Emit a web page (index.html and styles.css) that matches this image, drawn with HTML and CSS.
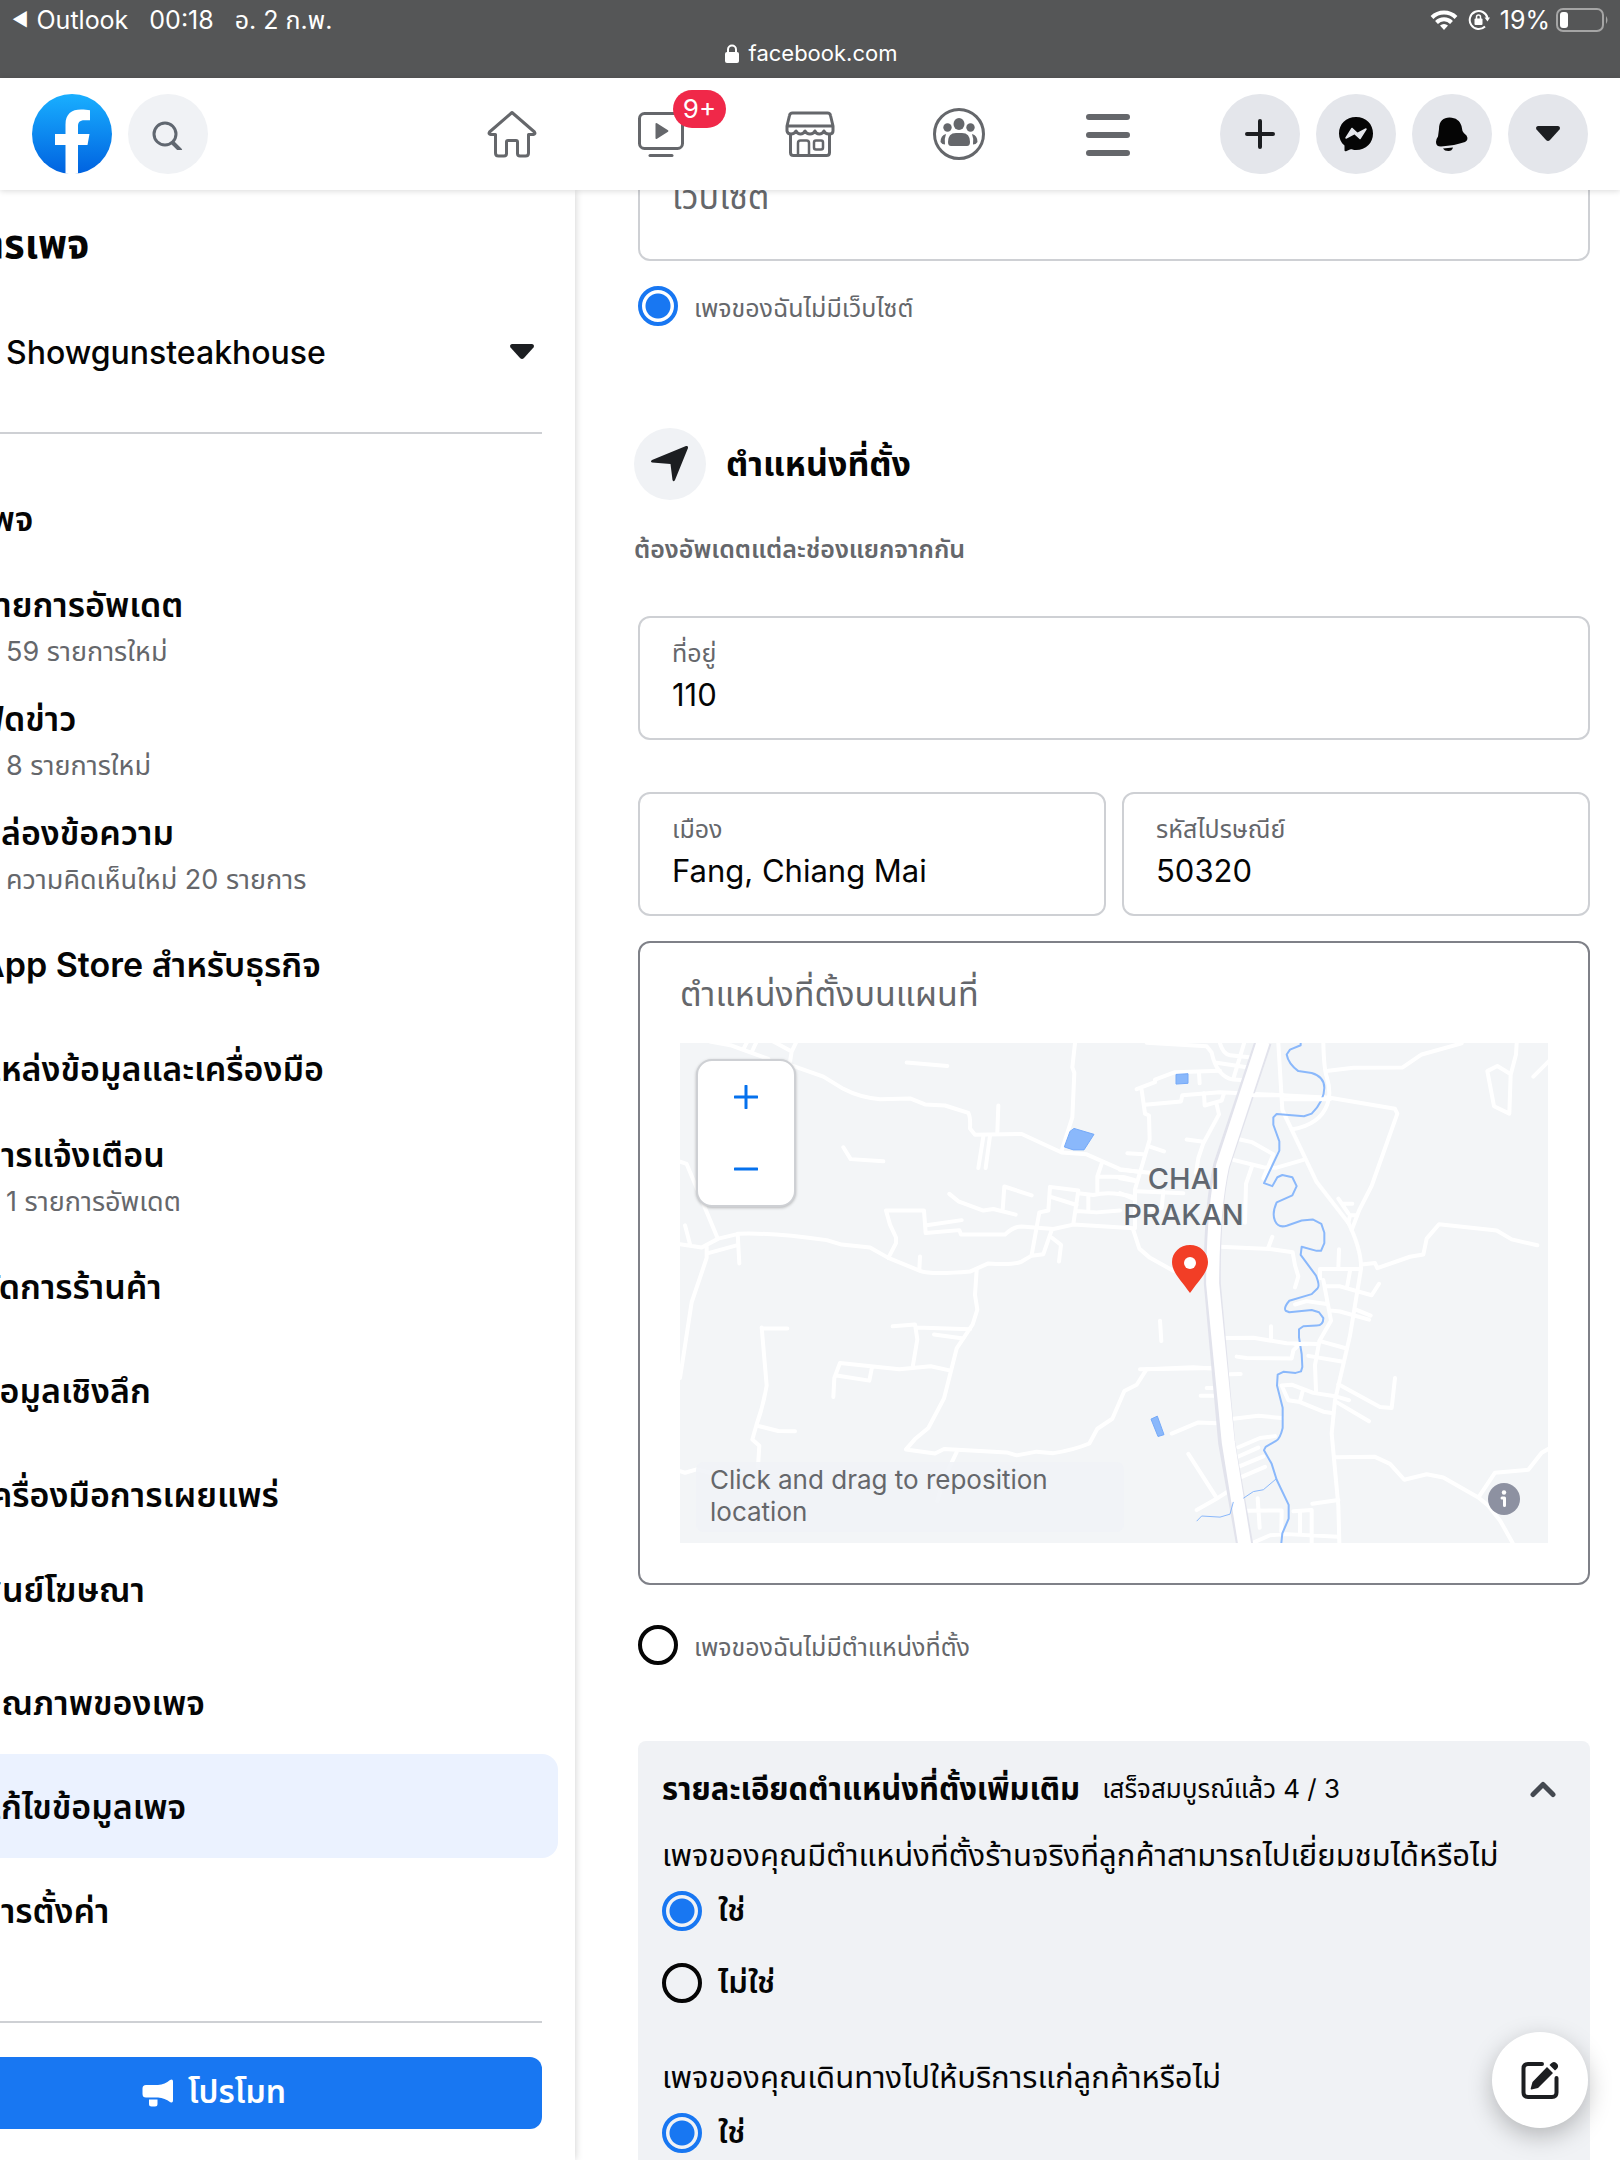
FILE: index.html
```
<!DOCTYPE html>
<html lang="th">
<head>
    <meta charset="UTF-8">
    <meta name="viewport" content="width=device-width, initial-scale=1.0">
    <title>แก้ไขข้อมูลเพจ | Facebook</title>
    <link rel="stylesheet" href="styles.css">
</head>
<body>
    <div class="statusbar">
        <div class="status-row">
            <span class="status-back">◀</span>
            <span>Outlook</span>
            <span class="status-time">00:18</span>
            <span class="status-time">อ. 2 ก.พ.</span>
            <div class="status-right">
                <svg width="28" height="22" viewBox="0 0 28 22" fill="none" stroke="#fff" stroke-width="4">
                    <path d="M2 8.5a17 17 0 0 1 24 0"/>
                    <path d="M6.500 13.500a10.500 10.500 0 0 1 15 0"/>
                    <path d="M14 21l-4-4.500a6 6 0 0 1 8 0z" fill="#fff" stroke="none"/>
                </svg>
                <svg width="22" height="22" viewBox="0 0 22 22" fill="none" stroke="#fff" stroke-width="2">
                    <path d="M17 17.500A9 9 0 1 1 19.500 9"/>
                    <path d="M16.500 8.500h5.500l-2.500 4z" fill="#fff" stroke="none"/>
                    <rect x="6.500" y="9.500" width="8" height="6.500" rx="1" fill="#fff" stroke="none"/>
                    <path d="M8.500 10V8a2 2 0 0 1 4 0v2" stroke-width="1.500"/>
                </svg>
                <span>19%</span>
                <svg width="54" height="24" viewBox="0 0 54 24">
                    <rect x="1" y="1" width="46" height="22" rx="6" fill="none" stroke="#a5a5a5" stroke-width="2"/>
                    <rect x="4" y="4" width="8" height="16" rx="3" fill="#fff"/>
                    <path d="M50 8q3 4 0 8z" fill="#a5a5a5"/>
                </svg>
            </div>
        </div>
        <div class="address-row">
            <svg width="14" height="19" viewBox="0 0 14 19">
                <rect x="0" y="8" width="14" height="11" rx="2" fill="#fff"/>
                <path d="M3 9V5.500a4 4 0 0 1 8 0V9" fill="none" stroke="#fff" stroke-width="2"/>
            </svg>
            <span>facebook.com</span>
        </div>
    </div>

    <header class="topbar">
        <div class="topbar-left">
            <a href="#" aria-label="Facebook">
                <svg width="80" height="80" viewBox="0 0 80 80">
                    <defs>
                        <linearGradient id="fb" x1="0" y1="0" x2="0" y2="1">
                            <stop offset="0" stop-color="#19afff"/>
                            <stop offset="1" stop-color="#0062e0"/>
                        </linearGradient>
                    </defs>
                    <circle cx="40" cy="40" r="40" fill="url(#fb)"/>
                    <path d="M33.500 80V51H23V40h10.500v-9.500c0-10.500 6-15 15.500-15 3.500 0 6.500.3 9 .8v10h-5.500c-5 0-6.500 2.200-6.500 6V40h11.500l-2 11H46v28.500q-6 1-12.500 0z" fill="#fff"/>
                </svg>
            </a>
            <button class="round-btn light" aria-label="ค้นหา">
                <svg width="32" height="32" viewBox="0 0 32 32" fill="none" stroke="#606770" stroke-width="3" stroke-linecap="round">
                    <circle cx="13" cy="16" r="11"/>
                    <path d="M21 25l7 7" stroke-width="4"/>
                </svg>
            </button>
        </div>
        <nav class="topnav">
            <a href="#" aria-label="หน้าหลัก">
                <svg width="52" height="52" viewBox="0 0 52 52" fill="none" stroke="#65676b" stroke-width="3" stroke-linejoin="round">
                    <path d="M26 4.500L3.500 24c-1 1.500 0 2.500 1 2.500H9.500v18.500q0 3 3 3h5.500q2.500 0 2.500-2.500V34q0-1.500 1.500-1.500h8q1.500 0 1.500 1.500v11.500q0 2.500 2.500 2.500h5.500q3 0 3-3V26.500h5c1 0 2-1 1-2.500z"/>
                </svg>
            </a>
            <a href="#" aria-label="วิดีโอ">
                <svg width="52" height="52" viewBox="0 0 52 52" fill="none" stroke="#65676b" stroke-width="3" stroke-linecap="round">
                    <rect x="4.500" y="5.500" width="43" height="35" rx="5"/>
                    <path d="M15 47.500h22"/>
                    <path d="M20.500 16v14q0 1.500 1.500.7l11-7q1-.7 0-1.400l-11-7q-1.500-.8-1.500.7z" fill="#65676b" stroke="none"/>
                </svg>
                <span class="badge">9+</span>
            </a>
            <a href="#" aria-label="Marketplace">
                <svg width="52" height="52" viewBox="0 0 52 52" fill="none" stroke="#65676b" stroke-width="3" stroke-linejoin="round">
                    <path d="M8.500 5h35q2.500 0 3 2.500L49 18v5q0 3-4 3t-5-3q-1.500 3-4.700 3T31 23q-1.500 3-5 3t-5-3q-1.500 3-4.500 3T12 23q-1.500 3-5 3t-4-3v-5L5.500 7.500q.5-2.500 3-2.500zM3 18h46"/>
                    <path d="M6.500 26v18.500q0 3 3 3h33q3 0 3-3V26"/>
                    <path d="M14 47V35q0-2.500 2.500-2.500h6Q25 32.500 25 35v12M30 34.500q0-2 2-2h5q2 0 2 2v5q0 2-2 2h-5q-2 0-2-2z" stroke-width="2.500"/>
                </svg>
            </a>
            <a href="#" aria-label="กลุ่ม">
                <svg width="52" height="52" viewBox="0 0 52 52" fill="#65676b">
                    <circle cx="26" cy="26" r="24.500" fill="none" stroke="#65676b" stroke-width="3"/>
                    <ellipse cx="26" cy="16" rx="5.500" ry="6"/>
                    <circle cx="14.500" cy="19.500" r="4.200"/>
                    <circle cx="37.500" cy="19.500" r="4.200"/>
                    <path d="M15 34q0-9 8-9h6q8 0 8 9 0 4-3 4H18q-3 0-3-4z"/>
                    <path d="M13 26q-5.500 1.500-5.500 8 1.500 2.500 4.500 2.500-1-5.500 1-10.500zM39 26q5.500 1.500 5.500 8-1.500 2.500-4.500 2.500 1-5.500-1-10.500z"/>
                </svg>
            </a>
            <a href="#" aria-label="เมนู">
                <svg width="52" height="52" viewBox="0 0 52 52" fill="none" stroke="#65676b" stroke-width="6" stroke-linecap="round">
                    <path d="M7 9h38M7 27h38M7 45h38"/>
                </svg>
            </a>
        </nav>
        <div class="topbar-right">
            <button class="round-btn" aria-label="สร้าง">
                <svg width="32" height="32" viewBox="0 0 32 32" stroke="#1c1e21" stroke-width="4" stroke-linecap="round">
                    <path d="M16 3v26M3 16h26"/>
                </svg>
            </button>
            <button class="round-btn" aria-label="Messenger">
                <svg width="36" height="36" viewBox="0 0 36 36">
                    <path d="M18 1C8 1 1 8 1 17.500c0 5 2 9.200 5.500 12V34.500q.3 1 1.500.7l4.500-2c2 .6 3.500.8 5.500.8 10 0 17-7 17-16.500S28 1 18 1z" fill="#050505"/>
                    <path d="M8 22l6-9.500 5.500 5L28 13l-6 9.500-5.500-5z" fill="#e4e6eb" stroke="#e4e6eb" stroke-width="1.500" stroke-linejoin="round"/>
                </svg>
            </button>
            <button class="round-btn" aria-label="การแจ้งเตือน">
                <svg width="36" height="36" viewBox="0 0 36 36" fill="#050505">
                    <path d="M5 13C5 5 9.500 1.500 15.500 1.500 22 1.500 26 5 27.500 10l1 5q.8 2 4 4.500 2.500 4-1.500 6.500-10 3.500-24 4.500-5 0-5-4.500 0-3 2-5.500z"/>
                    <path d="M9 32.500l10-1q-1 3.500-4.500 3.500-4 0-5.500-2.500z"/>
                </svg>
            </button>
            <button class="round-btn" aria-label="บัญชี">
                <svg width="26" height="18" viewBox="0 0 26 18"><path d="M3 1h20q3 1 1.500 3.500L15 15q-2 2-4 0L1.500 4.500Q0 2 3 1z" fill="#1c1e21"/></svg>
            </button>
        </div>
    </header>

    <div class="page">
        <aside class="sidebar">
            <h1>จัดการเพจ</h1>
            <button class="page-switch">
                <span>Showgunsteakhouse</span>
                <svg width="26" height="18" viewBox="0 0 26 18"><path d="M3 1h20q3 1 1.500 3.500L15 15q-2 2-4 0L1.500 4.500Q0 2 3 1z" fill="#1c1e21"/></svg>
            </button>
            <hr>
            <ul class="menu">
                <li class="menu-head">เพจ</li>
                <li><a href="#">รายการอัพเดต<small>59 รายการใหม่</small></a></li>
                <li><a href="#">ฟีดข่าว<small>8 รายการใหม่</small></a></li>
                <li><a href="#">กล่องข้อความ<small>ความคิดเห็นใหม่ 20 รายการ</small></a></li>
                <li><a href="#">App Store สำหรับธุรกิจ</a></li>
                <li><a href="#">แหล่งข้อมูลและเครื่องมือ</a></li>
                <li><a href="#">การแจ้งเตือน<small>1 รายการอัพเดต</small></a></li>
                <li><a href="#">จัดการร้านค้า</a></li>
                <li><a href="#">ข้อมูลเชิงลึก</a></li>
                <li><a href="#">เครื่องมือการเผยแพร่</a></li>
                <li><a href="#" class="external">ศูนย์โฆษณา</a></li>
                <li><a href="#">คุณภาพของเพจ</a></li>
                <li><a href="#" class="active">แก้ไขข้อมูลเพจ</a></li>
                <li><a href="#">การตั้งค่า</a></li>
            </ul>
            <div class="sidebar-foot">
                <button class="promote">
                    <svg width="32" height="28" viewBox="0 0 32 28" fill="#fff">
                        <path d="M4 6h12q7-.5 12-5 3-1.500 3 1.500v19q0 3-3 1.500-5-4-12-4.500H4q-3.500 0-3.500-3.500V9.500Q.5 6 4 6zM7 20.500h8.500V25q0 2.500-2.500 2.500H9.500Q7 27.500 7 25z"/>
                    </svg>
                    โปรโมท
                </button>
            </div>
        </aside>

        <main class="content">
            <div class="field website">
                <input type="text" id="website" placeholder="เว็บไซต์" aria-label="เว็บไซต์">
            </div>
            <label class="choice muted"><input type="radio" name="website" checked><span>เพจของฉันไม่มีเว็บไซต์</span></label>

            <div class="section-head">
                <span class="section-icon">
                    <svg width="40" height="38" viewBox="0 0 40 38"><path d="M36 1q2.500-.5 2 2L25 35q-1.500 2.500-2.500 0L20.500 19 2 17.500q-2-1 0-2.500z" fill="#1c1e21"/></svg>
                </span>
                <h2>ตำแหน่งที่ตั้ง</h2>
            </div>
            <p class="hint">ต้องอัพเดตแต่ละช่องแยกจากกัน</p>

            <div class="field address">
                <label for="address">ที่อยู่</label>
                <input type="text" id="address" value="110">
            </div>
            <div class="field-row">
                <div class="field">
                    <label for="city">เมือง</label>
                    <input type="text" id="city" value="Fang, Chiang Mai">
                </div>
                <div class="field">
                    <label for="zip">รหัสไปรษณีย์</label>
                    <input type="text" id="zip" value="50320">
                </div>
            </div>

            <section class="map-card">
                <h3>ตำแหน่งที่ตั้งบนแผนที่</h3>
                <div class="map">
                    <svg class="map-tiles" viewBox="60 59 2604 1352" preserveAspectRatio="none">
                        <!-- roads, west side -->
                        <g class="road">
                            <path d="M150 55L215 66L325 102M250 76L262 55M275 84L290 55M340 55L395 82L408 58M395 82L390 110M390 118L490 150L550 183Q600 207 660 211L750 209L795 225L855 228L925 248Q932 260 930 290L945 307L1085 305L1205 355L1280 360L1380 400L1440 408"/>
                            <path d="M740 112L862 121M1245 59L1237 125L1243 140L1237 260L1205 350M1015 228L1012 300M970 312L955 397M990 310L977 397M550 341L572 373L670 379"/>
                            <path d="M60 380L80 386L172 585M60 603L125 612L175 588L235 575Q330 571 500 592L545 604L630 612L685 640L780 675Q810 686 930 677L985 655Q1060 660 1085 650L1115 634L1150 630L1175 565M140 610V640L95 760L60 965M145 627L235 605M233 575L238 655M75 552L90 603"/>
                            <path d="M685 640L708 600V585L690 550L678 512H792L797 573L898 565L903 577H1035Q1060 555 1085 555L1180 562L1240 550L1420 560M800 552L905 538M778 672L780 636"/>
                            <path d="M868 467L895 487L970 512L1000 508L1067 523M1028 510L1033 447L1115 471M1115 632L1138 517L1165 512L1170 448L1255 458L1240 548M1172 475L1250 497M1255 465L1300 470Q1350 458 1420 475M1285 475V512M1250 513L1310 517L1380 512M1325 385L1312 420V462M1315 420L1390 421L1425 430M1175 585L1203 605L1197 650"/>
                            <path d="M950 673L945 740L952 780L938 820L890 885L852 1020L805 1100L765 1130L738 1158L825 1169L852 1157L1040 1166L1070 1174L1130 1164L1180 1168Q1240 1160 1288 1142L1312 1102L1357 1075L1393 1000L1430 983L1460 941L1600 936L1665 940"/>
                            <path d="M698 825L765 820L772 860L758 935M770 828L930 833M822 847L910 858M520 1016L523 965L540 924L718 941L812 933L872 945M530 958L628 972L635 940M305 828L320 985Q310 1040 290 1090L277 1131L298 1148L294 1205M308 830L382 831M292 1094L355 1108L405 1109M60 1217L75 1221L110 1212L150 1221M890 1165L850 1240L832 1298"/>
                        </g>
                        <!-- town and river, east side -->
                        <g transform="translate(1380 0)">
                            <g class="road">
                                <path d="M50 184L105 165V158L165 138L300 134M65 186L75 250L87 255L89 320L45 455V560M75 226L183 217L187 200L300 192L485 200L630 207L825 237L832 250L755 445L718 510L695 565"/>
                                <path d="M80 58L260 68L275 85Q290 150 340 158L375 160M300 60Q310 90 330 92L395 98M285 112L385 125M372 60L342 150M237 140L239 168M252 195L254 228L305 215L312 195M290 225L297 252L250 330L235 370L228 410M200 320L250 326M85 338L132 352M22 357L70 360M0 402L90 410M0 425L45 432M0 465L40 480M50 460L190 465M130 460L125 505L90 510"/>
                                <path d="M475 60L487 240L500 265L590 435L685 545Q725 620 723 670L690 850L645 1025L635 1115L655 1310L658 1410"/>
                                <path d="M610 60Q612 130 620 150Q635 195 622 225Q600 280 515 293M625 134L700 126L848 125L905 90L1025 60M360 320L395 327L460 360L430 425M340 375L430 395L470 396L550 375M395 395L378 440L375 545"/>
                                <path d="M40 565L58 615L90 640L160 675M300 610L450 616L518 625L525 660L535 690L525 720M445 612L457 583M120 810L124 865M60 941L290 938M315 857L400 856L500 871L595 873M453 825V857M350 907L380 911L515 912L520 890L540 872M330 955L362 954M260 992H298M242 1013H298"/>
                                <path d="M600 695V670L720 670M655 668L657 617M690 675L682 715M610 700L633 810L598 865L585 930L588 1000M615 716L660 717L755 741L777 710M525 766L560 757L620 765M630 782L660 785L747 807M708 780L752 796M600 865L680 885M565 905L665 920M725 658L765 654L772 668L870 637L910 631L920 588L957 549L1130 566L1175 590L1252 606"/>
                                <path d="M655 480L685 520M668 494H697M685 545L690 525H710M485 985L515 983L580 1005L650 1015L687 1025M485 985L505 1025L540 1030L610 1056L640 1060M540 1028L548 1000M655 982L780 1043L815 1046L825 965M650 1030L747 1082M340 1075L415 1067L485 1073M155 1115L235 1085L310 1088M355 1152L420 1127L465 1122M355 1177L415 1153M360 1203L430 1177M365 1232L435 1205M205 1170L287 1285M230 1322L287 1293L335 1265M413 1290L419 1370M375 1324L485 1323L484 1380M400 1410L450 1390L500 1387L655 1394M520 1325L575 1322V1410M577 1305L655 1295M540 1325V1385"/>
                                <path d="M645 1179L765 1178L810 1197L853 1240L920 1225L970 1234L1075 1288L1105 1310L1140 1350L1178 1411M1075 1288L1125 1221L1225 1213L1265 1167L1290 1154M1190 60L1188 90L1172 145L1168 250L1122 230L1102 135L1132 121L1170 142M1240 150L1290 105"/>
                            </g>
                            <path class="highway-edge" d="M430 55L305 390Q275 510 277 710L320 1140L375 1420"/>
                            <path class="highway" d="M430 55L308 390Q279 510 278 710L325 1140L375 1420"/>
                            <path class="river" d="M542 59V65L510 77L500 90Q505 115 535 135L575 140Q613 150 613 180Q613 215 575 250L552 257L470 251L460 260V280L478 325V350L432 438L457 446L472 422L487 416L517 422L530 446L517 471L470 490Q455 520 465 540Q475 560 500 553L545 539L578 536L604 548L613 572V600L603 621H590L545 610L542 632L588 688Q600 715 593 722L575 738L508 756Q490 775 497 783L508 787L575 781L597 787L610 803Q610 822 590 823L550 825L537 833V855L545 900L547 935L543 947L527 951L490 948L473 956L471 985L488 1045V1100Q480 1130 468 1135L437 1151L432 1160L455 1197L470 1240L506 1308V1345L487 1385L484 1411"/>
                            <path class="stream" d="M468 1238L430 1267L400 1272L370 1290M340 1300L330 1333L300 1341L245 1338L230 1352"/>
                            <path class="road" d="M400 200H490M490 211H630M525 873H560"/>
                            <path class="lake" d="M168 144L204 142V168L168 170zM93 1076L112 1068L132 1118L114 1123z"/>
                        </g>
                        <path class="lake" d="M1213 340L1230 298L1242 290L1302 306L1272 348H1240z"/>
                    </svg>
                    <div class="map-zoom">
                        <button aria-label="ขยาย"><svg width="24" height="24" viewBox="0 0 24 24"><path d="M12 1v22M1 12h22"/></svg></button>
                        <button aria-label="ย่อ"><svg width="24" height="24" viewBox="0 0 24 24"><path d="M1 12h22"/></svg></button>
                    </div>
                    <div class="map-place">CHAI<br>PRAKAN</div>
                    <svg class="map-pin" width="36" height="48" viewBox="0 0 36 48">
                        <path d="M18 0C8 0 0 7.500 0 17c0 10 8 17 18 31 10-14 18-21 18-31C36 7.500 28 0 18 0z" fill="#f23e26"/>
                        <circle cx="18" cy="18" r="6" fill="#fff"/>
                    </svg>
                    <div class="map-tip">Click and drag to reposition location</div>
                    <button class="map-info" aria-label="ข้อมูล">
                        <svg width="32" height="32" viewBox="0 0 32 32">
                            <circle cx="16" cy="16" r="16" fill="#8d91a1"/>
                            <circle cx="16" cy="9.500" r="2.200" fill="#fff"/>
                            <path d="M14 15h2.500v7.500" fill="none" stroke="#fff" stroke-width="3" stroke-linejoin="round" stroke-linecap="round"/>
                        </svg>
                    </button>
                </div>
            </section>
            <label class="choice muted"><input type="radio" name="nolocation"><span>เพจของฉันไม่มีตำแหน่งที่ตั้ง</span></label>

            <section class="details">
                <div class="details-head">
                    <h3>รายละเอียดตำแหน่งที่ตั้งเพิ่มเติม</h3>
                    <span>เสร็จสมบูรณ์แล้ว 4 / 3</span>
                    <button aria-label="ย่อส่วนนี้">
                        <svg width="26" height="18" viewBox="0 0 26 18" fill="none" stroke="#444950" stroke-width="5" stroke-linecap="round" stroke-linejoin="round"><path d="M3 14.500L13 4.500l10 10"/></svg>
                    </button>
                </div>
                <p>เพจของคุณมีตำแหน่งที่ตั้งร้านจริงที่ลูกค้าสามารถไปเยี่ยมชมได้หรือไม่</p>
                <label class="choice"><input type="radio" name="visit" checked>ใช่</label>
                <label class="choice"><input type="radio" name="visit">ไม่ใช่</label>
                <p class="next">เพจของคุณเดินทางไปให้บริการแก่ลูกค้าหรือไม่</p>
                <label class="choice"><input type="radio" name="travel" checked>ใช่</label>
            </section>
        </main>
    </div>

    <button class="compose" aria-label="ข้อความใหม่">
        <svg width="40" height="40" viewBox="0 0 40 40">
            <path d="M22 4H8Q3.500 4 3.500 8.500v24Q3.500 37 8 37h24q4.500 0 4.500-4.500V18" fill="none" stroke="#1c1e21" stroke-width="4" stroke-linecap="round"/>
            <path d="M27 7l6 6-15 15-6.500 1.500q-1 0-.8-1L12.500 22zM31 3.500q2.500-3 5.500-.3t.5 5.500L35 10.500 29.500 5z" fill="#1c1e21"/>
        </svg>
    </button>
</body>
</html>
```
FILE: styles.css
```
* {
    box-sizing: border-box;
}
body {
    margin: 0;
    height: 100vh;
    overflow: hidden;
    display: flex;
    flex-direction: column;
    background-color: #fff;
    color: #050505;
    font-family: Inter, "Noto Sans Thai", "Noto Sans", sans-serif;
}
a {
    color: inherit;
    text-decoration: none;
}
button, input {
    font-family: inherit;
    color: inherit;
}
button {
    border: none;
    padding: 0;
    background: none;
    cursor: pointer;
}
h1, h2, h3, p {
    margin: 0;
}
svg {
    display: block;
}

/* status bar */
.statusbar {
    flex: none;
    height: 78px;
    padding: 4px 10px 0 12px;
    background-color: #555657;
    color: #fff;
    font-size: 25px;
    line-height: 32px;
}
.status-row {
    display: flex;
    height: 32px;
}
.status-back {
    font-size: 18px;
    margin-right: 8px;
}
.status-time {
    margin-left: 21px;
}
.status-right {
    display: flex;
    align-items: center;
    gap: 10px;
    margin-left: auto;
}
.status-right span {
    margin-right: -4px;
}
.address-row {
    display: flex;
    justify-content: center;
    align-items: center;
    gap: 10px;
    height: 34px;
    font-size: 22px;
}

/* header */
.topbar {
    flex: none;
    position: relative;
    z-index: 2;
    display: flex;
    align-items: center;
    justify-content: space-between;
    height: 112px;
    padding: 0 32px;
    background-color: #fff;
    box-shadow: 0 1px 6px rgba(0, 0, 0, 0.15);
}
.topbar-left, .topbar-right {
    display: flex;
    gap: 16px;
    width: 368px;
}
.round-btn {
    display: flex;
    align-items: center;
    justify-content: center;
    width: 80px;
    height: 80px;
    border-radius: 50%;
    background-color: #e4e6eb;
}
.round-btn.light {
    background-color: #f0f2f5;
}
.topnav {
    flex: 1;
    display: flex;
    max-width: 746px;
}
.topnav a {
    flex: 1;
    position: relative;
    display: flex;
    justify-content: center;
}
.badge {
    position: absolute;
    left: 50%;
    top: -18px;
    margin-left: 12px;
    padding: 0 10px;
    border-radius: 19px;
    background-color: #f02849;
    color: #fff;
    font-size: 26px;
    line-height: 38px;
}

/* columns */
.page {
    flex: 1;
    min-height: 0;
    display: flex;
}
.sidebar {
    flex: none;
    width: 575px;
    overflow: hidden;
    padding-top: 18px;
    box-shadow: 0 0 8px rgba(0, 0, 0, 0.2);
}
.sidebar h1 {
    margin-left: -86px;
    font-size: 40px;
    line-height: 72px;
}
.page-switch {
    display: flex;
    justify-content: space-between;
    align-items: center;
    width: 100%;
    height: 144px;
    padding: 0 40px 0 6px;
    font-size: 32px;
    font-weight: 500;
}
.sidebar hr {
    height: 2px;
    margin: 8px 33px 36px 0;
    border: none;
    background-color: #ced0d4;
}
.menu {
    margin: 0;
    padding: 0;
    list-style: none;
    font-size: 34px;
    font-weight: 600;
}
.menu a {
    display: flex;
    flex-direction: column;
    justify-content: center;
    min-height: 104px;
    margin-right: 17px;
    padding: 8px 0 6px;
    border-radius: 0 16px 16px 0;
    line-height: 54px;
    text-indent: -20px;
}
.menu .menu-head {
    height: 100px;
    line-height: 98px;
    text-indent: -20px;
}
.menu small {
    padding-bottom: 6px;
    color: #65676b;
    font-size: 27px;
    font-weight: 400;
    line-height: 40px;
    text-indent: 6px;
}
.menu a.external {
    padding-bottom: 24px;
}
.menu a.active {
    background-color: #ebf2ff;
}
.sidebar-foot {
    margin: 59px 33px 0 0;
    padding-top: 34px;
    border-top: 2px solid #ced0d4;
}
.promote {
    display: flex;
    align-items: center;
    justify-content: center;
    gap: 14px;
    width: 100%;
    height: 72px;
    padding-right: 114px;
    border-radius: 0 12px 12px 0;
    background-color: #1877f2;
    color: #fff;
    font-size: 32px;
    font-weight: 600;
}

/* form */
.content {
    flex: 1;
    min-width: 0;
    overflow: hidden;
    padding: 0 30px 0 63px;
}
.field {
    height: 124px;
    padding: 18px 32px;
    border: 2px solid #ced0d4;
    border-radius: 12px;
}
.field label {
    display: block;
    color: #65676b;
    font-size: 25px;
    line-height: 34px;
}
.field input {
    display: block;
    width: 100%;
    height: 48px;
    padding: 0;
    border: none;
    outline: none;
    background: none;
    font-size: 31px;
}
.field.website {
    margin-top: -53px;
    padding-top: 33px;
}
.field.website input {
    font-size: 34px;
}
.field input::placeholder {
    color: #65676b;
    opacity: 1;
}
.choice {
    display: flex;
    align-items: center;
    height: 40px;
    gap: 16px;
    font-size: 31px;
    font-weight: 600;
}
.choice.muted {
    margin-top: 25px;
    color: #65676b;
    font-size: 25px;
    font-weight: 400;
}
.choice.muted span {
    padding-top: 5px;
}
.choice input {
    appearance: none;
    flex: none;
    width: 40px;
    height: 40px;
    margin: 0;
    border: 4px solid #050505;
    border-radius: 50%;
}
.choice input:checked {
    border-color: #1877f2;
    background: radial-gradient(circle, #1877f2 12px, transparent 13px);
}
.section-head {
    display: flex;
    align-items: center;
    gap: 20px;
    margin: 102px 0 0 -4px;
}
.section-icon {
    display: flex;
    align-items: center;
    justify-content: center;
    width: 72px;
    height: 72px;
    border-radius: 50%;
    background-color: #f0f2f5;
}
.section-head h2 {
    font-size: 34px;
    font-weight: 700;
    line-height: 72px;
}
.hint {
    margin: 28px 0 46px -4px;
    color: #65676b;
    font-size: 25px;
    font-weight: 600;
    line-height: 42px;
}
.field-row {
    display: flex;
    gap: 16px;
    margin: 52px 0 25px;
}
.field-row .field {
    flex: 1;
    min-width: 0;
}
.map-card {
    padding: 16px 40px 40px;
    border: 2px solid #7f8188;
    border-radius: 12px;
}
.map-card h3 {
    margin-bottom: 14px;
    color: #65676b;
    font-size: 34px;
    font-weight: 400;
    line-height: 70px;
}
.map {
    position: relative;
    height: 500px;
    background-color: #f3f5f7;
}
.map-tiles {
    width: 100%;
    height: 100%;
}
.map-tiles path {
    fill: none;
    vector-effect: non-scaling-stroke;
    stroke-linejoin: round;
}
.map-tiles .road, .road path {
    stroke: #fff;
    stroke-width: 4px;
    stroke-linecap: round;
}
.map-tiles .highway-edge {
    stroke: #e2e3ec;
    stroke-width: 17px;
}
.map-tiles .highway {
    stroke: #fff;
    stroke-width: 13px;
}
.map-tiles .river {
    stroke: #8ab8fb;
    stroke-width: 2px;
}
.map-tiles .stream {
    stroke: #8ab8fb;
    stroke-width: 1px;
}
.map-tiles .lake {
    fill: #8ab8fb;
    stroke: #74a9f8;
    stroke-width: 1px;
}
.map-zoom {
    position: absolute;
    left: 16px;
    top: 16px;
    display: flex;
    flex-direction: column;
    width: 100px;
    height: 148px;
    border: 2px solid #ced0d4;
    border-radius: 16px;
    background-color: #fff;
    box-shadow: 0 1px 3px rgba(0, 0, 0, 0.25);
}
.map-zoom button {
    flex: 1;
    display: flex;
    align-items: center;
    justify-content: center;
}
.map-zoom path {
    stroke: #0571ed;
    stroke-width: 3px;
    stroke-linecap: round;
}
.map-place {
    position: absolute;
    left: 58%;
    top: 118px;
    transform: translateX(-50%);
    color: #606770;
    font-size: 29px;
    font-weight: 500;
    line-height: 36px;
    text-align: center;
}
.map-pin {
    position: absolute;
    left: 58.8%;
    top: 202px;
    margin-left: -18px;
}
.map-tip {
    position: absolute;
    left: 16px;
    bottom: 11px;
    width: 428px;
    padding: 2px 60px 4px 14px;
    border-radius: 8px;
    background-color: rgba(240, 242, 247, 0.85);
    color: #65676b;
    font-size: 26px;
    line-height: 32px;
}
.map-info {
    position: absolute;
    right: 28px;
    bottom: 28px;
}
.map-card + .choice {
    margin-top: 40px;
}

/* more details */
.details {
    margin-top: 76px;
    padding: 16px 24px 40px;
    border-radius: 8px;
    background-color: #f0f2f5;
}
.details-head {
    display: flex;
    align-items: center;
    gap: 22px;
    line-height: 64px;
}
.details-head h3 {
    font-size: 31px;
    font-weight: 700;
}
.details-head span {
    font-size: 26px;
}
.details-head button {
    margin: 0 10px 0 auto;
}
.details p {
    padding-top: 6px;
    margin-bottom: 8px;
    font-size: 31px;
    line-height: 56px;
}
.details .choice + .choice {
    margin-top: 32px;
}
.details p.next {
    margin-top: 40px;
}

.compose {
    position: fixed;
    right: 32px;
    bottom: 32px;
    display: flex;
    align-items: center;
    justify-content: center;
    width: 96px;
    height: 96px;
    border-radius: 50%;
    background-color: #fff;
    box-shadow: 0 8px 24px rgba(0, 0, 0, 0.25);
}
```
